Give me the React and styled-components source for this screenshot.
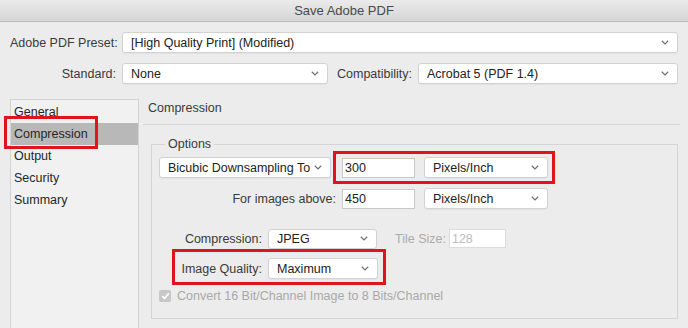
import React from "react";
import styled, { createGlobalStyle } from "styled-components";

const Global = createGlobalStyle`
  html, body { margin: 0; padding: 0; background: #ececec; }
  * { box-sizing: border-box; }
`;

const Window = styled.div`
  width: 688px;
  height: 328px;
  overflow: hidden;
  background: #ececec;
  font-family: "Liberation Sans", Arial, sans-serif;
  font-size: 12.5px;
  color: #333;
  display: flex;
  flex-direction: column;
`;

const TitleBar = styled.div`
  height: 22px;
  flex-shrink: 0;
  border-bottom: 1px solid #bcbcbc;
  background: linear-gradient(#ebebeb, #d5d5d5);
  display: flex;
  align-items: center;
  justify-content: center;
  color: #4a4a4a;
  font-size: 13px;
`;

const Header = styled.div`
  padding: 10px 10px 0 10px;
  display: flex;
  flex-direction: column;
  gap: 10px;
`;

const FormRow = styled.div`
  display: flex;
  align-items: center;
  height: 21px;
  margin-top: ${(p) => p.$mt || 0}px;
`;

const Label = styled.span`
  width: ${(p) => (p.$w ? `${p.$w}px` : "auto")};
  flex-shrink: 0;
  text-align: right;
  margin-right: 6px;
  margin-left: ${(p) => p.$ml || 0}px;
  color: ${(p) => (p.$disabled ? "#ababab" : "#3a3a3a")};
  white-space: nowrap;
`;

const SelectBox = styled.div`
  width: ${(p) => (p.$w ? `${p.$w}px` : "auto")};
  flex: ${(p) => (p.$w ? "0 0 auto" : "1 1 auto")};
  height: ${(p) => p.$h || 21}px;
  background: #fff;
  border: 1px solid #d2d2d2;
  border-radius: 3px;
  box-shadow: 0 1px 1px rgba(0, 0, 0, 0.04);
  display: flex;
  align-items: center;
  padding: 0 8px 0 8px;
  color: #222;
  margin-left: ${(p) => p.$ml || 0}px;
`;

const SelectText = styled.span`
  flex: 1;
  white-space: nowrap;
  overflow: hidden;
`;

const TextInput = styled.div`
  width: ${(p) => p.$w}px;
  height: ${(p) => p.$h || 20}px;
  background: #fff;
  border: 1px solid ${(p) => (p.$disabled ? "#dcdcdc" : "#c9c9c9")};
  display: flex;
  align-items: center;
  padding-left: 2px;
  color: ${(p) => (p.$disabled ? "#bcbcbc" : "#222")};
  flex-shrink: 0;
  margin-left: ${(p) => p.$ml || 0}px;
`;

const Chevron = () => (
  <svg width="8" height="5" viewBox="0 0 8 5" style={{ flexShrink: 0 }}>
    <polyline points="0.8,0.8 4,3.9 7.2,0.8" fill="none" stroke="#6f6f6f" strokeWidth="1.2" />
  </svg>
);

const Select = ({ children, ...rest }) => (
  <SelectBox {...rest}>
    <SelectText>{children}</SelectText>
    <Chevron />
  </SelectBox>
);

const Body = styled.div`
  display: flex;
  margin-top: 15px;
  flex: 1;
  min-height: 0;
`;

const Sidebar = styled.div`
  margin-left: 10px;
  width: 129px;
  height: 260px;
  flex-shrink: 0;
  border: 1px solid #d3d3d3;
  background: #f1f1f1;
  padding-top: 1px;
`;

const NavItem = styled.div`
  position: relative;
  height: 22px;
  line-height: 22px;
  padding-left: 3px;
  color: #262626;
  background: ${(p) => (p.$active ? "#b8b8b8" : "transparent")};
`;

const RedFrame = styled.div`
  position: absolute;
  left: ${(p) => p.$l}px;
  top: ${(p) => p.$t}px;
  width: ${(p) => p.$w}px;
  height: ${(p) => p.$h}px;
  border: 3px solid #e0141c;
  pointer-events: none;
`;

const Panel = styled.div`
  flex: 1;
  margin-left: 4px;
  display: flex;
  flex-direction: column;
`;

const PanelHeading = styled.div`
  padding: 1px 0 8px 5px;
  line-height: 16px;
  border-bottom: 1px solid #d6d6d6;
  margin-right: 8px;
  color: #3a3a3a;
`;

const Group = styled.fieldset`
  margin: 11px 10px 0 8px;
  height: 183px;
  border: 1px solid #d4d4d4;
  padding: 0 7px;
  min-width: 0;
`;

const Legend = styled.legend`
  padding: 0 3px;
  margin-left: 6px;
  line-height: 16px;
  color: #3a3a3a;
`;

const Highlight = styled.div`
  position: relative;
  display: flex;
  align-items: center;
  margin-left: ${(p) => p.$ml || 0}px;
`;

const CheckRow = styled.div`
  display: flex;
  align-items: center;
  margin-top: 9px;
  height: 16px;
  color: #a9a9a9;
  gap: 6px;
`;

const CheckBox = styled.span`
  width: 12px;
  height: 12px;
  border-radius: 2px;
  background: #c7c7c7;
  display: flex;
  align-items: center;
  justify-content: center;
  flex-shrink: 0;
`;

export default function App() {
  return (
    <Window>
      <Global />
      <TitleBar>Save Adobe PDF</TitleBar>
      <Header>
        <FormRow>
          <Label $w={106}>Adobe PDF Preset:</Label>
          <Select>[High Quality Print] (Modified)</Select>
        </FormRow>
        <FormRow>
          <Label $w={106}>Standard:</Label>
          <Select $w={206}>None</Select>
          <Label $ml={9}>Compatibility:</Label>
          <Select>Acrobat 5 (PDF 1.4)</Select>
        </FormRow>
      </Header>
      <Body>
        <Sidebar>
          <NavItem>General</NavItem>
          <NavItem $active>
            Compression
            <RedFrame $l={-7} $t={-7} $w={94} $h={33} />
          </NavItem>
          <NavItem>Output</NavItem>
          <NavItem>Security</NavItem>
          <NavItem>Summary</NavItem>
        </Sidebar>
        <Panel>
          <PanelHeading>Compression</PanelHeading>
          <Group>
            <Legend>Options</Legend>
            <FormRow $mt={5}>
              <Select $w={172}>Bicubic Downsampling To</Select>
              <Highlight $ml={11}>
                <TextInput $w={73}>300</TextInput>
                <Select $w={124} $ml={9}>Pixels/Inch</Select>
                <RedFrame $l={-9} $t={-6} $w={222} $h={33} />
              </Highlight>
            </FormRow>
            <FormRow $mt={10}>
              <Label $w={177}>For images above:</Label>
              <TextInput $w={73}>450</TextInput>
              <Select $w={124} $ml={9}>Pixels/Inch</Select>
            </FormRow>
            <FormRow $mt={19}>
              <Label $w={103}>Compression:</Label>
              <Select $w={109} $h={20}>JPEG</Select>
              <Label $ml={18} $disabled>Tile Size:</Label>
              <TextInput $w={57} $h={19} $ml={-3} $disabled>128</TextInput>
            </FormRow>
            <FormRow $mt={9}>
              <Highlight>
                <Label $w={103}>Image Quality:</Label>
                <Select $w={110}>Maximum</Select>
                <RedFrame $l={13} $t={-9} $w={214} $h={36} />
              </Highlight>
            </FormRow>
            <CheckRow>
              <CheckBox>
                <svg width="9" height="8" viewBox="0 0 9 8">
                  <polyline points="1.2,4.2 3.5,6.4 7.8,1.4" fill="none" stroke="#fff" strokeWidth="1.8" />
                </svg>
              </CheckBox>
              Convert 16 Bit/Channel Image to 8 Bits/Channel
            </CheckRow>
          </Group>
        </Panel>
      </Body>
    </Window>
  );
}
